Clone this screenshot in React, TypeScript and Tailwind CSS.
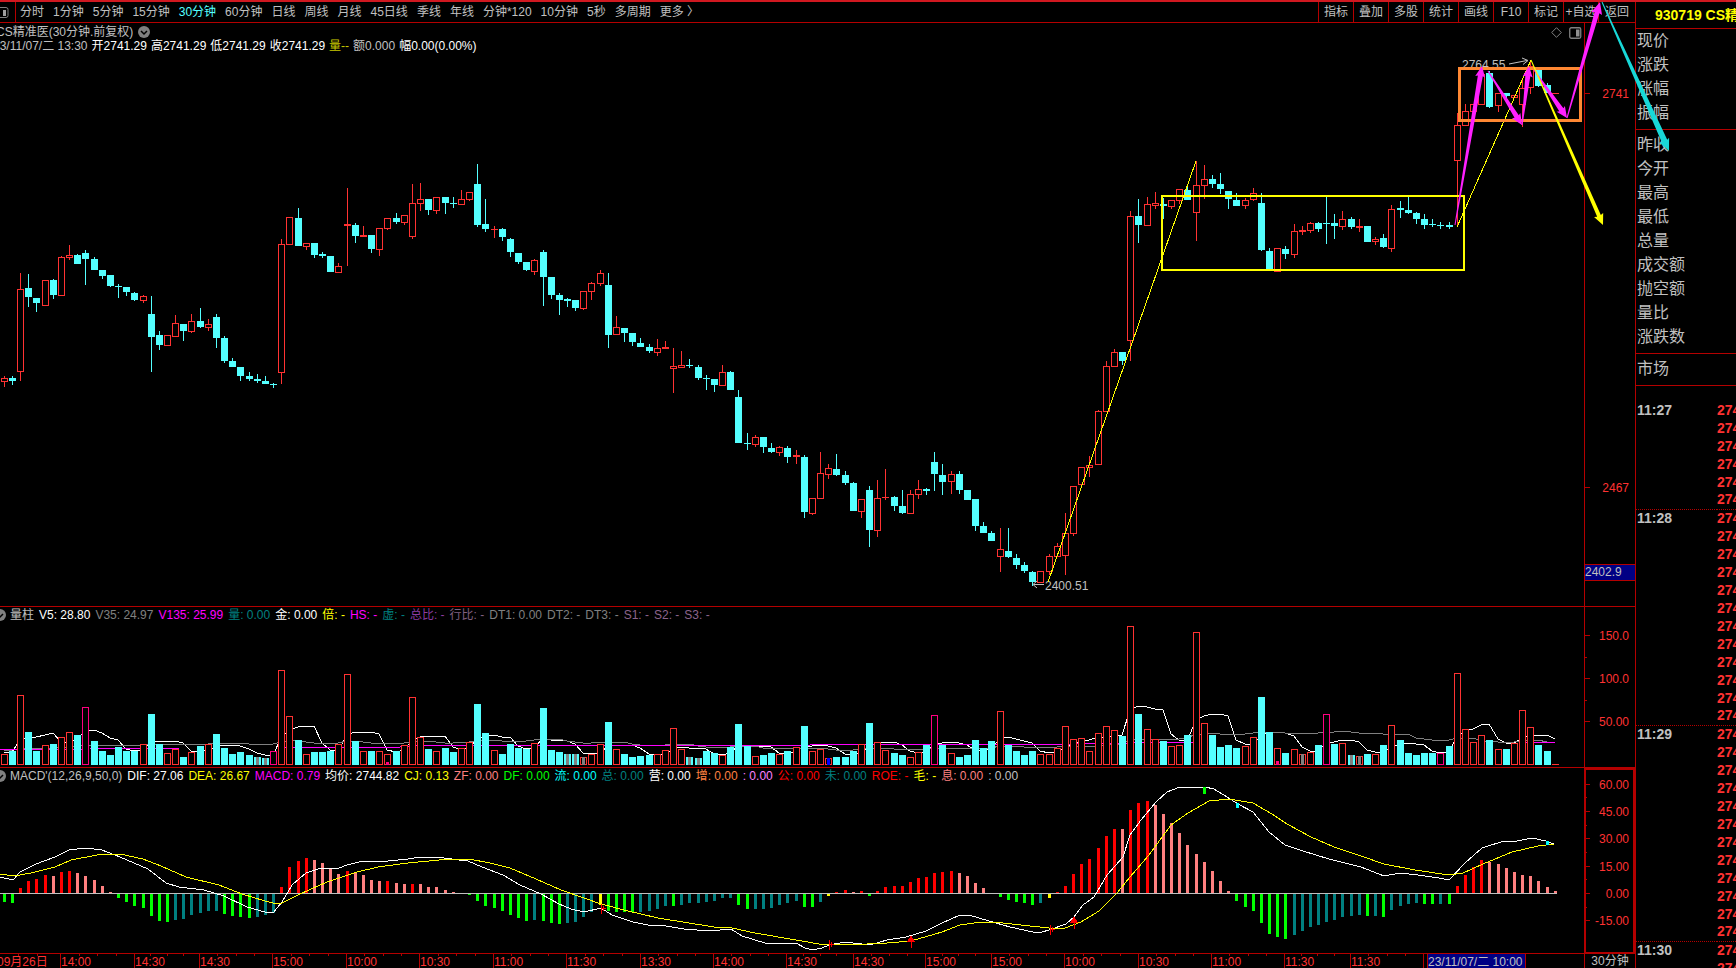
import React from 'react';
import { clsx } from 'clsx';

type Candle = [string, number, number, number, number];
type Point = [number, number];

const RED = '#ff3232';
const CYAN = '#54ffff';
const LINE = '#b40000';
const GRAY = '#c0c0c0';
const FONT = '"Liberation Sans", "Noto Sans CJK SC", sans-serif';

const PERIODS = [
  '分时', '1分钟', '5分钟', '15分钟', '30分钟', '60分钟', '日线', '周线', '月线', '45日线',
  '季线', '年线', '分钟*120', '10分钟', '5秒', '多周期', '更多 〉',
];

const TOOLS = ['指标', '叠加', '多股', '统计', '画线', 'F10', '标记', '+自选', '返回'];

const QUOTE_GROUPS = [
  ['现价', '涨跌', '涨幅', '振幅'],
  ['昨收', '今开', '最高', '最低', '总量', '成交额', '抛空额', '量比', '涨跌数'],
  ['市场'],
];

const TICK_TIMES: Record<number, string> = { 0: '11:27', 6: '11:28', 18: '11:29', 30: '11:30' };

const PRICE_INFO = [
  { text: '开2741.29', color: 'text-white' },
  { text: '高2741.29', color: 'text-white' },
  { text: '低2741.29', color: 'text-white' },
  { text: '收2741.29', color: 'text-white' },
  { text: '量--', color: 'text-[#c8c800]' },
  { text: '额0.000', color: 'text-[#c0c0c0]' },
  { text: '幅0.00(0.00%)', color: 'text-white' },
];

const VOLUME_INFO = [
  { text: '量柱', color: 'text-[#c0c0c0]' },
  { text: 'V5: 28.80', color: 'text-white' },
  { text: 'V35: 24.97', color: 'text-[#808080]' },
  { text: 'V135: 25.99', color: 'text-[#ff00ff]' },
  { text: '量: 0.00', color: 'text-[#008080]' },
  { text: '金: 0.00', color: 'text-white' },
  { text: '倍: -', color: 'text-[#ffff00]' },
  { text: 'HS: -', color: 'text-[#ff00ff]' },
  { text: '虚: -', color: 'text-[#008080]' },
  { text: '总比: -', color: 'text-[#8c3ca0]' },
  { text: '行比: -', color: 'text-[#806080]' },
  { text: 'DT1: 0.00', color: 'text-[#808080]' },
  { text: 'DT2: -', color: 'text-[#808080]' },
  { text: 'DT3: -', color: 'text-[#808080]' },
  { text: 'S1: -', color: 'text-[#8c648c]' },
  { text: 'S2: -', color: 'text-[#8c648c]' },
  { text: 'S3: -', color: 'text-[#8c648c]' },
];

const MACD_INFO = [
  { text: "MACD'(12,26,9,50,0)", color: 'text-[#c0c0c0]' },
  { text: 'DIF: 27.06', color: 'text-white' },
  { text: 'DEA: 26.67', color: 'text-[#ffff00]' },
  { text: 'MACD: 0.79', color: 'text-[#ff00ff]' },
  { text: '均价: 2744.82', color: 'text-white' },
  { text: 'CJ: 0.13', color: 'text-[#ffff00]' },
  { text: 'ZF: 0.00', color: 'text-[#ff8080]' },
  { text: 'DF: 0.00', color: 'text-[#00ff00]' },
  { text: '流: 0.00', color: 'text-[#00ffff]' },
  { text: '总: 0.00', color: 'text-[#008080]' },
  { text: '营: 0.00', color: 'text-white' },
  { text: '增: 0.00', color: 'text-[#ff8040]' },
  { text: ': 0.00', color: 'text-[#ff80ff]' },
  { text: '公: 0.00', color: 'text-[#ff0000]' },
  { text: '未: 0.00', color: 'text-[#008080]' },
  { text: 'ROE: -', color: 'text-[#ff0000]' },
  { text: '毛: -', color: 'text-[#ffff00]' },
  { text: '息: 0.00', color: 'text-[#ff8080]' },
  { text: ': 0.00', color: 'text-[#c0c0c0]' },
];

// direction, high, body top, body bottom, low
const CANDLES: Candle[] = [
  ['r', 376, 378, 382, 387], ['c', 376, 378, 381, 385], ['r', 273, 289, 372, 381], ['c', 274, 288, 297, 307],
  ['c', 298, 298, 303, 312], ['r', 280, 280, 306, 306], ['c', 279, 280, 295, 299], ['r', 256, 257, 296, 296],
  ['r', 245, 255, 258, 260], ['c', 254, 255, 264, 264], ['c', 250, 253, 259, 285], ['c', 257, 259, 270, 270],
  ['c', 270, 270, 276, 279], ['c', 275, 275, 286, 287], ['c', 284, 286, 287, 298], ['c', 287, 287, 292, 296],
  ['c', 292, 293, 300, 301], ['r', 295, 296, 301, 303], ['c', 296, 314, 337, 372], ['c', 331, 335, 345, 350],
  ['r', 335, 335, 346, 346], ['r', 315, 323, 337, 337], ['c', 324, 324, 331, 341], ['r', 314, 321, 332, 333],
  ['c', 308, 321, 327, 328], ['r', 319, 324, 328, 331], ['c', 314, 317, 338, 348], ['c', 336, 338, 361, 363],
  ['c', 358, 361, 367, 367], ['c', 367, 367, 376, 381], ['c', 372, 376, 379, 381], ['c', 374, 379, 381, 383],
  ['c', 376, 381, 384, 384], ['c', 383, 384, 385, 388], ['r', 239, 244, 373, 384], ['r', 217, 217, 245, 245],
  ['c', 208, 218, 246, 246], ['r', 243, 243, 247, 250], ['c', 243, 243, 255, 258], ['c', 252, 254, 256, 258],
  ['c', 256, 256, 272, 272], ['r', 263, 266, 273, 273], ['r', 188, 224, 226, 266], ['c', 223, 225, 236, 243],
  ['r', 226, 235, 237, 237], ['c', 235, 235, 249, 253], ['r', 228, 228, 250, 256], ['r', 218, 218, 229, 230],
  ['c', 213, 218, 222, 224], ['r', 215, 215, 223, 225], ['r', 184, 203, 237, 239], ['r', 183, 199, 204, 211],
  ['c', 199, 199, 210, 215], ['r', 197, 197, 211, 214], ['c', 197, 197, 203, 214], ['c', 197, 203, 204, 208],
  ['r', 190, 199, 205, 205], ['r', 192, 192, 200, 201], ['c', 164, 184, 225, 227], ['c', 199, 224, 229, 232],
  ['r', 226, 229, 230, 238], ['c', 228, 229, 237, 241], ['c', 238, 239, 252, 257], ['c', 253, 253, 262, 264],
  ['c', 262, 262, 270, 271], ['r', 259, 260, 272, 275], ['c', 250, 252, 277, 306], ['c', 277, 277, 295, 299],
  ['c', 293, 295, 300, 315], ['c', 298, 299, 301, 307], ['c', 300, 300, 308, 311], ['r', 291, 291, 309, 310],
  ['r', 282, 283, 292, 300], ['r', 270, 273, 284, 286], ['c', 273, 285, 335, 348], ['r', 316, 327, 335, 335],
  ['c', 328, 328, 333, 342], ['c', 333, 333, 342, 346], ['c', 338, 343, 347, 347], ['c', 344, 347, 351, 353],
  ['r', 339, 348, 353, 356], ['r', 341, 347, 349, 349], ['r', 348, 366, 369, 393], ['r', 351, 365, 368, 368],
  ['c', 359, 365, 366, 368], ['c', 365, 367, 378, 380], ['c', 375, 378, 379, 390], ['c', 379, 379, 385, 392],
  ['r', 365, 372, 386, 386], ['c', 371, 372, 390, 390], ['c', 390, 397, 443, 443], ['c', 433, 443, 444, 450],
  ['r', 435, 437, 445, 447], ['c', 437, 437, 447, 453], ['c', 443, 448, 452, 453], ['r', 446, 447, 453, 456],
  ['c', 446, 448, 457, 463], ['r', 450, 455, 457, 464], ['c', 455, 457, 512, 518], ['r', 498, 498, 514, 515],
  ['r', 452, 473, 499, 499], ['r', 464, 468, 475, 479], ['c', 454, 469, 475, 476], ['c', 471, 475, 483, 485],
  ['c', 482, 483, 511, 511], ['r', 499, 499, 512, 518], ['c', 486, 490, 530, 547], ['r', 480, 498, 531, 537],
  ['r', 469, 497, 498, 500], ['c', 496, 497, 506, 511], ['c', 490, 506, 513, 514], ['r', 490, 494, 514, 514],
  ['r', 480, 489, 495, 499], ['c', 488, 489, 491, 495], ['c', 452, 462, 474, 491], ['c', 464, 475, 482, 495],
  ['r', 471, 474, 482, 494], ['c', 471, 474, 490, 494], ['c', 490, 490, 500, 500], ['c', 499, 499, 526, 531],
  ['c', 522, 526, 533, 533], ['c', 531, 533, 541, 541], ['r', 528, 549, 557, 572], ['c', 528, 551, 557, 558],
  ['c', 554, 558, 565, 569], ['c', 562, 565, 571, 573], ['c', 571, 572, 582, 586], ['r', 571, 571, 583, 583],
  ['r', 554, 556, 572, 575], ['r', 543, 546, 557, 557], ['r', 513, 533, 556, 575], ['r', 486, 486, 534, 536],
  ['r', 467, 467, 485, 485], ['r', 456, 465, 468, 477], ['r', 410, 411, 465, 465], ['r', 361, 366, 412, 412],
  ['r', 349, 352, 367, 367], ['c', 352, 352, 361, 365], ['r', 211, 216, 341, 361], ['c', 199, 216, 225, 243],
  ['r', 197, 204, 226, 226], ['r', 192, 203, 206, 209], ['c', 198, 204, 206, 219], ['r', 200, 200, 207, 209],
  ['r', 189, 189, 201, 204], ['c', 187, 190, 200, 200], ['r', 161, 185, 213, 241], ['r', 165, 179, 186, 199],
  ['c', 175, 179, 184, 188], ['c', 173, 184, 189, 194], ['c', 191, 191, 199, 209], ['c', 193, 200, 206, 206],
  ['r', 198, 200, 206, 209], ['r', 188, 193, 200, 201], ['c', 193, 203, 250, 251], ['c', 248, 251, 270, 270],
  ['r', 248, 248, 272, 272], ['c', 246, 249, 254, 259], ['r', 224, 231, 255, 258], ['r', 226, 230, 232, 235],
  ['r', 222, 223, 231, 233], ['c', 222, 223, 229, 232], ['c', 197, 223, 224, 244], ['c', 214, 223, 226, 239],
  ['r', 211, 219, 227, 230], ['c', 217, 219, 227, 229], ['r', 219, 226, 228, 232], ['c', 226, 226, 242, 242],
  ['r', 237, 239, 242, 245], ['c', 234, 238, 247, 248], ['r', 205, 209, 249, 252], ['c', 201, 208, 210, 218],
  ['c', 197, 210, 213, 214], ['c', 212, 213, 219, 224], ['c', 214, 219, 225, 229], ['c', 219, 224, 225, 227],
  ['c', 222, 225, 226, 229], ['c', 222, 225, 227, 229], ['r', 113, 125, 161, 225], ['r', 104, 111, 126, 126],
  ['r', 104, 104, 112, 112], ['r', 70, 74, 105, 105], ['c', 71, 73, 107, 108], ['r', 93, 93, 106, 112],
  ['c', 93, 93, 96, 100], ['r', 95, 95, 98, 98], ['r', 80, 88, 105, 127], ['r', 60, 66, 88, 94],
  ['c', 68, 70, 86, 87], ['c', 83, 85, 93, 93], ['r', 93, 93, 94, 94],
];

const VOLUMES = [
  11, 14, 70, 33, 14, 20, 21, 28, 33, 30, 58, 24, 14, 10, 18, 14, 14, 21, 51, 21,
  12, 16, 8, 13, 19, 21, 31, 17, 11, 13, 10, 8, 7, 14, 95, 49, 25, 11, 13, 13,
  14, 21, 91, 24, 14, 14, 14, 11, 14, 20, 68, 28, 16, 14, 17, 13, 17, 23, 61, 32,
  15, 11, 21, 17, 16, 22, 57, 15, 13, 11, 11, 8, 11, 21, 43, 16, 11, 8, 9, 10,
  11, 15, 37, 16, 8, 7, 14, 12, 10, 18, 41, 19, 9, 10, 12, 11, 14, 18, 39, 14,
  16, 7, 8, 8, 14, 21, 42, 23, 15, 12, 10, 8, 13, 20, 50, 20, 12, 8, 10, 25,
  17, 24, 54, 20, 14, 10, 14, 11, 11, 17, 39, 26, 27, 14, 32, 39, 35, 29, 139, 51,
  36, 26, 24, 19, 20, 30, 133, 42, 30, 18, 20, 17, 19, 28, 68, 33, 17, 12, 16, 11,
  13, 20, 51, 21, 22, 10, 9, 11, 11, 20, 40, 25, 12, 10, 12, 12, 12, 19, 92, 36,
  23, 30, 25, 16, 16, 22, 55, 38, 20, 14, 1,
];

const MAGENTA_VOLUMES = [10, 33, 114, 162, 176];
const FADED_VOLUMES = [31, 32, 69, 70, 71, 84, 85, 159, 165, 166];

const HISTOGRAM = [
  -8, -9, 5, 12, 14, 18, 17, 21, 22, 20, 17, 13, 7, 1, -4, -8, -12, -14, -22, -27,
  -28, -26, -25, -21, -19, -17, -17, -20, -22, -23, -24, -23, -21, -19, 6, 26, 32, 35, 33, 30,
  24, 19, 22, 20, 18, 13, 12, 12, 10, 9, 9, 9, 6, 6, 3, 1, 0, -1, -7, -12,
  -14, -17, -21, -24, -27, -26, -27, -29, -30, -29, -28, -23, -18, -11, -17, -18, -18, -18, -18, -17,
  -15, -12, -12, -11, -9, -9, -8, -7, -4, -4, -11, -15, -15, -15, -14, -11, -9, -7, -13, -13,
  -8, -2, 1, 3, 1, 2, -2, 2, 6, 7, 7, 11, 15, 16, 20, 21, 22, 20, 17, 10,
  5, 0, -3, -6, -8, -9, -11, -9, -4, 1, 7, 19, 29, 34, 45, 57, 64, 64, 83, 90,
  92, 88, 79, 70, 60, 48, 39, 31, 22, 12, 2, -7, -13, -17, -29, -40, -43, -45, -41, -37,
  -33, -31, -28, -26, -23, -22, -21, -22, -22, -23, -16, -12, -10, -9, -10, -10, -10, -10, 7, 18,
  26, 33, 31, 29, 25, 21, 18, 17, 12, 6, 2,
];

// bars that keep the trend colour although the rounded value did not move
const TREND_BARS = [0, 47, 50, 76, 77, 82, 99, 110, 175, 177];
const SIGNAL_BARS = [73, 101, 128];

const DIF: Point[] = [
  [0, 877], [13, 880], [20, 872], [36, 864], [55, 857], [69, 850], [86, 848], [102, 850], [120, 857], [148, 869],
  [166, 883], [179, 887], [204, 890], [224, 896], [247, 907], [265, 912], [273, 913], [282, 902], [292, 885],
  [306, 873], [321, 868], [339, 868], [347, 865], [363, 861], [378, 862], [408, 859], [420, 857], [444, 858],
  [459, 860], [468, 861], [482, 867], [503, 875], [520, 885], [541, 894], [559, 904], [571, 909], [584, 912],
  [601, 908], [612, 915], [633, 922], [648, 925], [666, 926], [684, 929], [709, 931], [731, 929], [742, 936],
  [765, 943], [780, 944], [796, 943], [805, 948], [813, 950], [822, 948], [829, 945], [845, 942], [870, 945],
  [887, 940], [906, 937], [926, 931], [942, 923], [960, 915], [969, 915], [989, 921], [1010, 927], [1033, 932],
  [1042, 932], [1049, 930], [1066, 924], [1074, 917], [1083, 905], [1094, 897], [1107, 875], [1123, 857],
  [1130, 835], [1141, 820], [1156, 802], [1167, 792], [1180, 787], [1205, 787], [1214, 789], [1227, 797],
  [1238, 804], [1253, 812], [1269, 832], [1285, 845], [1303, 851], [1329, 859], [1361, 867], [1384, 876],
  [1400, 873], [1418, 875], [1439, 878], [1449, 880], [1465, 863], [1482, 848], [1504, 841], [1517, 841],
  [1532, 838], [1546, 841], [1554, 844],
];

const DEA: Point[] = [
  [0, 874], [14, 876], [31, 873], [55, 867], [71, 860], [97, 855], [120, 854], [143, 859], [161, 866], [186, 877],
  [219, 885], [242, 894], [265, 901], [273, 903], [282, 903], [296, 896], [311, 889], [327, 882], [357, 872],
  [378, 867], [408, 863], [439, 860], [469, 859], [490, 863], [510, 868], [536, 879], [561, 890], [584, 898],
  [601, 904], [628, 911], [658, 918], [689, 923], [714, 927], [732, 928], [755, 933], [796, 940], [819, 944],
  [848, 945], [887, 943], [911, 941], [942, 932], [960, 925], [981, 922], [994, 922], [1021, 925], [1049, 928],
  [1065, 928], [1081, 922], [1099, 911], [1117, 893], [1130, 877], [1149, 855], [1171, 825], [1188, 813],
  [1209, 801], [1229, 799], [1253, 803], [1272, 814], [1287, 824], [1311, 837], [1334, 847], [1361, 856],
  [1384, 864], [1415, 870], [1449, 875], [1463, 873], [1483, 864], [1512, 852], [1538, 846], [1554, 844],
];

const V135: Point[] = [
  [0, 750], [90, 749], [180, 748], [280, 748], [290, 747], [400, 747], [410, 746], [810, 745], [1070, 744],
  [1130, 743], [1200, 742], [1555, 742],
];

const TIMES: [number, string][] = [
  [60, '14:00'], [134, '14:30'], [199, '14:30'], [272, '15:00'], [346, '10:00'], [419, '10:30'], [493, '11:00'],
  [566, '11:30'], [640, '13:30'], [713, '14:00'], [786, '14:30'], [853, '14:30'], [925, '15:00'], [991, '15:00'],
  [1064, '10:00'], [1138, '10:30'], [1211, '11:00'], [1284, '11:30'], [1350, '11:30'], [1423, ''],
];

const barX = (i: number) => Math.floor(4.25 + i * 8.163);
const toPoints = (pts: Point[]) => pts.map((p) => p.join(',')).join(' ');

const average = (size: number, pad: number): Point[] =>
  VOLUMES.map((_, i) => {
    let sum = 0;
    for (let k = i - size + 1; k <= i; k++) sum += k < 0 ? pad : VOLUMES[k];
    return [barX(i), Math.round(765 - sum / size)];
  });

const histColor = (i: number) => {
  const v = HISTOGRAM[i];
  if (SIGNAL_BARS.includes(i)) return '#ffff00';
  const prev = i ? HISTOGRAM[i - 1] : 0;
  const trend = TREND_BARS.includes(i) || Math.abs(v) > Math.abs(prev) || v * prev < 0;
  if (v > 0) return (trend && v > prev) || TREND_BARS.includes(i) ? '#ff0000' : '#ff8080';
  return trend ? '#00ff00' : '#008080';
};

// line that widens from its start and ends in an arrow head
const arrowPoints = (x1: number, y1: number, x2: number, y2: number, w: number, head: number) => {
  const len = Math.hypot(x2 - x1, y2 - y1);
  const ux = (x2 - x1) / len;
  const uy = (y2 - y1) / len;
  const at = (along: number, side: number): Point => [
    x1 + ux * along - uy * side,
    y1 + uy * along + ux * side,
  ];
  const neck = len - head;
  return toPoints([
    at(0, 0.5), at(neck, w / 2), at(neck - 1, head / 2), at(len, 0), at(neck - 1, -head / 2), at(neck, -w / 2), at(0, -0.5),
  ]);
};

const CollapseIcon: React.FC<{ className?: string }> = ({ className }) => (
  <svg width="12" height="12" viewBox="0 0 12 12" className={clsx('shrink-0', className)}>
    <circle cx="6" cy="6" r="6" fill="#808080" />
    <path d="M3 5l3 3 3-3" fill="none" stroke="#000" strokeWidth="1.5" />
  </svg>
);

const Legend: React.FC<{ items: { text: string; color: string }[] }> = ({ items }) => (
  <div className="flex h-4 shrink-0 items-center gap-[5px] whitespace-nowrap">
    <CollapseIcon className="-ml-[6px] -mr-[1px]" />
    {items.map((item, i) => (
      <span key={i} className={item.color}>{item.text}</span>
    ))}
  </div>
);

interface AxisProps {
  top: number;
  labels: [number, string][];
  minor?: number[];
  boxed?: boolean;
  children?: React.ReactNode;
}

const Axis: React.FC<AxisProps> = ({ top, labels, minor = [], boxed, children }) => (
  <div className={clsx('w-[51px] shrink-0 border-[#b40000]', boxed ? 'border-2' : 'border-l')}>
    <svg className="h-full w-full overflow-visible" shapeRendering="crispEdges">
      <g transform={`translate(${boxed ? -2 : -1},${-top - (boxed ? 2 : 0)})`}>
        {labels.map(([y, text]) => (
          <g key={text}>
            <rect x="1" y={y} width="5" height="1" fill={LINE} />
            <text x="45" y={y + 5} textAnchor="end" fontSize="12" fill={RED}>{text}</text>
          </g>
        ))}
        {minor.map((y) => (
          <rect key={y} x="1" y={y} width="2" height="1" fill={LINE} />
        ))}
        {children}
      </g>
    </svg>
  </div>
);

const Toolbar: React.FC = () => (
  <nav className="flex h-[21px] shrink-0 justify-between overflow-hidden whitespace-nowrap border-b border-[#b40000] text-[#c0c0c0]">
    <div className="flex items-center">
      <button aria-label="侧栏" className="flex h-full w-4 items-center border-r border-[#b40000]">
        <svg width="9" height="11" viewBox="0 0 9 11">
          <path d="M0 .5h6a2 2 0 0 1 2 2v6a2 2 0 0 1-2 2H0" fill="none" stroke="#808080" />
          <rect x="3" y="3" width="3" height="6" fill="#a0a0a0" />
        </svg>
      </button>
      <div className="ml-1 flex gap-[9px]">
        {PERIODS.map((p) => (
          <button key={p} className={p === '30分钟' ? 'text-[#54ffff]' : undefined}>{p}</button>
        ))}
      </div>
    </div>
    <div className="flex">
      {TOOLS.map((t) => (
        <button key={t} className="w-[35px] border-l border-[#b40000] text-center last:w-[37px]">{t}</button>
      ))}
    </div>
  </nav>
);

const PricePanel: React.FC = () => (
  <section className="flex min-h-0 flex-1 border-b border-[#b40000]">
    <div className="flex min-w-0 flex-1 flex-col overflow-hidden">
      <header className="flex h-8 shrink-0 justify-between whitespace-nowrap pt-[2px]">
        <div>
          <div className="-ml-[4px] flex h-[14px] items-center gap-[5px] text-[#c0c0c0]">
            CS精准医(30分钟.前复权)
            <CollapseIcon />
          </div>
          <div className="-ml-[7px] flex h-[14px] items-center gap-[4px]">
            <span className="text-[#c0c0c0]">23/11/07/二 13:30</span>
            {PRICE_INFO.map((item) => (
              <span key={item.text} className={item.color}>{item.text}</span>
            ))}
          </div>
        </div>
        <div className="mr-[2px] flex h-[15px] items-center gap-[7px]">
          <svg width="11" height="11" viewBox="0 0 11 11">
            <path d="M5.5 .7l4.8 4.8-4.8 4.8L.7 5.5z" fill="none" stroke="#808080" />
          </svg>
          <svg width="13" height="12" viewBox="0 0 13 12">
            <rect x=".75" y=".75" width="11" height="10.5" rx="1.5" fill="none" stroke="#808080" strokeWidth="1.3" />
            <rect x="7" y="2.5" width="3.5" height="7" fill="#909090" />
          </svg>
        </div>
      </header>
      <svg className="w-full min-h-0 flex-1" shapeRendering="crispEdges">
        <g transform="translate(0,-55)">
          {CANDLES.map(([dir, high, top, bottom, low], i) => {
            const x = barX(i);
            const color = dir === 'r' ? RED : CYAN;
            return (
              <g key={i} fill={color}>
                {low > high && <rect x={x} y={high} width="1" height={low - high} />}
                <rect x={x - 3} y={top} width="7" height={bottom - top} />
                {dir === 'r' && bottom - top > 2 && (
                  <rect x={x - 2} y={top + 1} width="5" height={bottom - top - 2} fill="#000" />
                )}
              </g>
            );
          })}
          <g fontSize="12" fill={GRAY}>
            <text x="1462" y="69">2764.55</text>
            <text x="1045" y="590">2400.51</text>
          </g>
          <g fill="none" stroke={GRAY} shapeRendering="auto">
            <path d="M1509 64l18-3.500M1522 58l6 2.500-5 4" />
            <path d="M1044 584.500h-10M1037 581l-4 3.500 4 3.500" />
          </g>
        </g>
      </svg>
    </div>
    <Axis top={23} labels={[[93, '2741'], [487, '2467']]}>
      <rect x="1" y="564" width="50" height="17" fill={LINE} />
      <rect x="1" y="565" width="50" height="15" fill="#000084" />
      <text x="1" y="576" fontSize="12" fill={GRAY}>2402.9</text>
    </Axis>
  </section>
);

const VolumePanel: React.FC = () => (
  <section className="flex h-[161px] shrink-0 border-b border-[#b40000]">
    <div className="flex min-w-0 flex-1 flex-col overflow-hidden">
      <Legend items={VOLUME_INFO} />
      <svg className="w-full min-h-0 flex-1" shapeRendering="crispEdges">
        <g transform="translate(0,-623)">
          <g fill="none">
            <polyline points={toPoints(average(5, 14))} stroke="#fff" />
            <polyline points={toPoints(average(35, 15))} stroke="#808080" />
            <polyline points={toPoints(V135)} stroke="#ff00ff" />
          </g>
          {VOLUMES.map((v, i) => {
            const x = barX(i) - 3;
            const hollow = CANDLES[i][0] === 'r' || MAGENTA_VOLUMES.includes(i);
            const color = MAGENTA_VOLUMES.includes(i) ? '#ff0080' : hollow ? RED : CYAN;
            return (
              <g key={i}>
                <rect x={x} y={765 - v} width="7" height={v} fill={color} />
                {hollow && v > 2 && <rect x={x + 1} y={766 - v} width="5" height={v - 2} fill="#000" />}
                {FADED_VOLUMES.includes(i) && <rect x={x + 2} y={765 - v} width="3" height={v} fill="#808080" />}
              </g>
            );
          })}
          <rect x={barX(47) - 1} y="762" width="3" height="3" fill="#ff0080" />
          <rect x={barX(156) - 1} y="761" width="3" height="4" fill="#ff0080" />
          <rect x={barX(101) - 1} y="758" width="3" height="7" fill="#0000ff" />
        </g>
      </svg>
    </div>
    <Axis top={607} labels={[[635, '150.0'], [678, '100.0'], [721, '50.00']]} minor={[657, 700]} />
  </section>
);

const MacdPanel: React.FC = () => (
  <section className="flex h-[186px] shrink-0">
    <div className="flex min-w-0 flex-1 flex-col overflow-hidden border-b border-[#b40000]">
      <Legend items={MACD_INFO} />
      <svg className="w-full min-h-0 flex-1" shapeRendering="crispEdges">
        <g transform="translate(0,-784)">
          {HISTOGRAM.map((v, i) => (
            <rect key={i} x={barX(i) - 1} y={v > 0 ? 893 - v : 894} width="3" height={Math.abs(v)} fill={histColor(i)} />
          ))}
          <rect x="0" y="893" width="1557" height="1" fill={GRAY} />
          <g fill="none">
            <polyline points={toPoints(DIF)} stroke="#fff" />
            <polyline points={toPoints(DEA)} stroke="#ffff00" />
          </g>
          <rect x="1203" y="787" width="3" height="7" fill="#00ff00" />
          <rect x="1236" y="803" width="3" height="5" fill="#00ffff" />
          <rect x="1546" y="841" width="3" height="4" fill="#00ffff" />
          <g stroke="#ff0000" fill="#ff0000">
            {[[601, 909], [829, 945], [1050, 930]].map(([x, y]) => (
              <path key={x} d={`M${x}.5 ${y - 5}v10M${x} ${y - 0.5}h5M${x + 2.5} ${y - 3}v5`} />
            ))}
            {[[911, 936], [1074, 917]].map(([x, y]) => (
              <path key={x} d={`M${x} ${y}l3 5h-6zM${x}.5 ${y}v12`} />
            ))}
          </g>
        </g>
      </svg>
    </div>
    <Axis
      top={768}
      boxed
      labels={[[784, '60.00'], [811, '45.00'], [838, '30.00'], [866, '15.00'], [893, '0.00'], [920, '-15.00']]}
      minor={[797, 825, 852, 879, 907]}
    />
  </section>
);

const TimeAxis: React.FC = () => (
  <footer className="flex h-[14px] shrink-0">
    <svg className="h-full min-w-0 flex-1" fontSize="12" fill={RED} shapeRendering="crispEdges">
      <text x="-3" y="12">09月26日</text>
      {[18, 37].map((x) => (
        <rect key={x} x={x} width="1" height="2" fill={LINE} />
      ))}
      {TIMES.map(([x, label], i) => {
        const next = TIMES[i + 1] ? TIMES[i + 1][0] : x;
        return (
          <g key={x}>
            <rect x={x} width="1" height="14" fill={LINE} />
            {[1, 2, 3].map((k) => (
              <rect key={k} x={Math.round(x + ((next - x) * k) / 4)} width="1" height="2" fill={LINE} />
            ))}
            <text x={x + 1} y="12">{label}</text>
          </g>
        );
      })}
      <rect x="1427" width="99" height="14" fill={LINE} />
      <rect x="1428" width="97" height="14" fill="#000084" />
      <text x="1428" y="12" fill={GRAY}>23/11/07/二 10:00</text>
    </svg>
    <div className="flex w-[51px] shrink-0 items-center justify-center border-l border-[#b40000] text-[#c0c0c0]">
      30分钟
    </div>
  </footer>
);

const QuotePanel: React.FC = () => (
  <aside className="flex w-[101px] shrink-0 flex-col overflow-hidden whitespace-nowrap border-l border-[#b40000]">
    <h1 className="h-[27px] shrink-0 border-b border-[#b40000] pl-[19px] text-sm leading-[26px] font-bold text-[#ffff00]">
      930719 CS精准医
    </h1>
    {QUOTE_GROUPS.map((group, i) => (
      <ul
        key={i}
        className={clsx(
          'shrink-0 border-b border-[#b40000] pl-[1px] text-base leading-6 text-[#c0c0c0]',
          i === 0 ? 'pb-1' : 'pt-[3px] pb-1',
        )}
      >
        {group.map((name) => (
          <li key={name}>{name}</li>
        ))}
      </ul>
    ))}
    <table className="mt-[15px] w-[140px] border-collapse text-sm font-bold">
      <tbody>
        {Array.from({ length: 32 }, (_, i) => (
          <tr key={i} className={clsx('h-[18px]', i > 0 && TICK_TIMES[i] && 'border-t border-dotted border-[#b40000]')}>
            <td className="w-[81px] p-0 pl-[1px] leading-[17px] text-[#c0c0c0]">{TICK_TIMES[i]}</td>
            <td className="p-0 leading-[17px] text-[#ff3232]">2741</td>
          </tr>
        ))}
      </tbody>
    </table>
  </aside>
);

// hand-drawn trend marks, they run across the panels
const Drawings: React.FC = () => (
  <svg className="pointer-events-none absolute inset-0 h-full w-full">
    <g fill="none" stroke="#ffff00">
      <path d="M1048 582L1196 161M1457 227L1531 60" shapeRendering="crispEdges" />
      <rect x="1162" y="196" width="302" height="74" strokeWidth="2" />
    </g>
    <rect x="1459.500" y="68.500" width="121" height="52" fill="none" stroke="#ff8833" strokeWidth="3" />
    <g fill="#ff20ff">
      <polygon points={arrowPoints(1455, 225, 1482, 66, 5, 10)} />
      <polygon points={arrowPoints(1488, 71, 1522, 125, 5, 10)} />
      <polygon points={arrowPoints(1522, 125, 1529, 66, 5, 10)} />
      <polygon points={arrowPoints(1534, 70, 1567, 118, 5, 10)} />
      <polygon points={arrowPoints(1567, 118, 1600, 2, 5, 11)} />
    </g>
    <polygon points={arrowPoints(1531, 60, 1603, 225, 4, 10)} fill="#ffff00" />
    <polygon points={arrowPoints(1602, 2, 1669, 151, 6, 11)} fill="#18d8d8" />
  </svg>
);

export default function App() {
  return (
    <div
      className="relative flex h-screen w-full flex-col overflow-hidden bg-black text-xs leading-[14px]"
      style={{ fontFamily: FONT }}
    >
      <div className="h-[2px] shrink-0 bg-[#d01820]" />
      <div className="flex min-h-0 flex-1">
        <main className="flex min-w-0 flex-1 flex-col">
          <Toolbar />
          <PricePanel />
          <VolumePanel />
          <MacdPanel />
          <TimeAxis />
        </main>
        <QuotePanel />
      </div>
      <Drawings />
    </div>
  );
}
